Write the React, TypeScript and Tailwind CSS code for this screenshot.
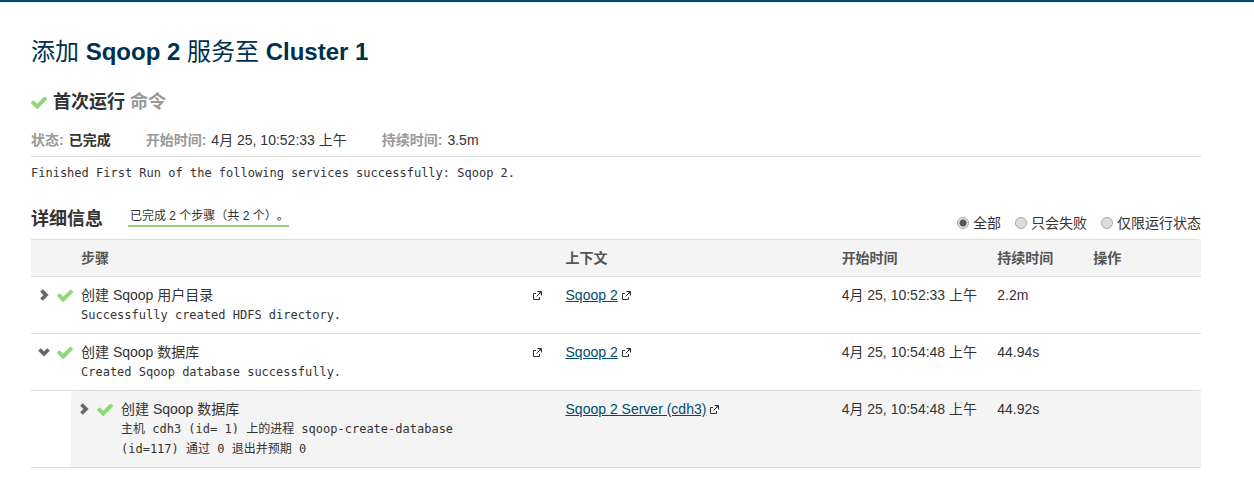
import { useState } from "react";

const META = [
  { label: "状态:", value: "已完成", strong: true },
  { label: "开始时间:", value: "4月 25, 10:52:33 上午" },
  { label: "持续时间:", value: "3.5m" },
];

const FILTERS = ["全部", "只会失败", "仅限运行状态"];

interface Step {
  name: string;
  message: string;
  context: string;
  start: string;
  duration: string;
  open?: boolean;
  nested?: boolean;
}

const STEPS: Step[] = [
  {
    name: "创建 Sqoop 用户目录",
    message: "Successfully created HDFS directory.",
    context: "Sqoop 2",
    start: "4月 25, 10:52:33 上午",
    duration: "2.2m",
  },
  {
    name: "创建 Sqoop 数据库",
    message: "Created Sqoop database successfully.",
    context: "Sqoop 2",
    start: "4月 25, 10:54:48 上午",
    duration: "44.94s",
    open: true,
  },
  {
    name: "创建 Sqoop 数据库",
    message: "主机 cdh3 (id= 1) 上的进程 sqoop-create-database\n(id=117) 通过 0 退出并预期 0",
    context: "Sqoop 2 Server (cdh3)",
    start: "4月 25, 10:54:48 上午",
    duration: "44.92s",
    nested: true,
  },
];

const MONO = "font-['DejaVu_Sans_Mono','Noto_Sans_CJK_SC',monospace] text-xs leading-5";

function CheckIcon() {
  return (
    <svg className="h-[13px] w-4 shrink-0 fill-[#8ed87a]" viewBox="121 270 1550 1252" preserveAspectRatio="none" aria-hidden="true">
      <path d="M1671 566q0 40-28 68l-724 724-136 136q-28 28-68 28t-68-28l-136-136-362-362q-28-28-28-68t28-68l136-136q28-28 68-28t68 28l294 295 656-657q28-28 68-28t68 28l136 136q28 28 28 68z" />
    </svg>
  );
}

function Chevron({ open }: { open?: boolean }) {
  return (
    <svg className={open ? "size-3 shrink-0 rotate-90" : "size-3 shrink-0"} viewBox="0 0 12 12" aria-hidden="true">
      <path
        d="M2.5 2.8 4.8.5 10.3 6l-5.500 5.500-2.300-2.300L5.700 6z"
        fill="#666"
        stroke="#666"
        strokeWidth=".6"
        strokeLinejoin="round"
      />
    </svg>
  );
}

function ExternalIcon() {
  return (
    <svg className="size-[9px]" viewBox="0 0 9 9" fill="none" stroke="#333" aria-hidden="true">
      <path d="M3 2.5H.5v6h6V6M4.5 .5h4v4M8 1 3.5 5.5" />
      <path d="M6 1h2v2z" fill="#333" stroke="none" />
    </svg>
  );
}

function StepRow({ step }: { step: Step }) {
  const cell = `border-b border-[#ddd] p-2 align-top ${step.nested ? "bg-[#f4f4f4]" : ""}`;

  return (
    <tr>
      {step.nested && <td className="border-b border-[#ddd]" />}
      <td colSpan={step.nested ? 1 : 2} className={`${cell} ${step.nested ? "rounded-tl" : ""}`}>
        <div className="flex items-start gap-2 pr-2">
          <button type="button" aria-label={step.name} aria-expanded={!!step.open} className="flex h-5 w-[10px] items-center justify-center">
            <Chevron open={step.open} />
          </button>
          <span className="flex h-5 items-center">
            <CheckIcon />
          </span>
          <div className="flex-1">
            <p>{step.name}</p>
            <p className={`${MONO} whitespace-pre-line`}>{step.message}</p>
          </div>
          {!step.nested && (
            <a href="#step" aria-label={step.name} className="flex h-5 items-center">
              <ExternalIcon />
            </a>
          )}
        </div>
      </td>
      <td className={cell}>
        <div className="flex items-center gap-1">
          <a href="#context" className="text-[#004c70] underline">
            {step.context}
          </a>
          <ExternalIcon />
        </div>
      </td>
      <td className={cell}>{step.start}</td>
      <td className={cell}>{step.duration}</td>
      <td className={`${cell} ${step.nested ? "rounded-tr" : ""}`} />
    </tr>
  );
}

export default function App() {
  const [filter, setFilter] = useState(FILTERS[0]);
  const th = "border-y border-[#ddd] bg-[#f4f4f4] p-2 text-left font-bold text-[#555]";

  return (
    <div className="border-t-2 border-[#004c70] bg-white font-['Liberation_Sans','Noto_Sans_CJK_SC',sans-serif] text-sm leading-5 text-[#333]">
      <main className="pr-[53px] pl-[31px]">
        <h1 className="pt-[30px] text-2xl leading-10 font-bold text-[#00304d]">
          <span className="font-normal">添加</span> Sqoop 2 <span className="font-normal">服务至</span> Cluster 1
        </h1>

        <h2 className="mt-5 flex items-center gap-[6px] text-lg leading-5 font-bold">
          <CheckIcon />
          <span>
            首次运行 <span className="text-[#999]">命令</span>
          </span>
        </h2>

        <dl className="mt-[18px] flex gap-[35px] border-b border-[#ddd] pb-[6px]">
          {META.map((item) => (
            <div key={item.label} className="flex gap-[5px]">
              <dt className="font-bold text-[#999]">{item.label}</dt>
              <dd className={item.strong ? "font-bold" : ""}>{item.value}</dd>
            </div>
          ))}
        </dl>

        <p className={`${MONO} mt-[6px]`}>
          Finished First Run of the following services successfully: Sqoop 2.
        </p>

        <section>
          <div className="mt-6 flex items-start pb-[6px]">
            <h3 className="mt-[2px] text-lg leading-5 font-bold">详细信息</h3>
            <p className="ml-[25px] border-b-2 border-[#8ed87a] pl-[2px] text-xs leading-[18px] [text-spacing-trim:space-all]">
              已完成 2 个步骤（共 2 个）。
            </p>
            <div role="radiogroup" aria-label="详细信息" className="mt-[6px] ml-auto flex gap-[14px]">
              {FILTERS.map((name) => (
                <label key={name} className="flex items-center gap-1">
                  <input
                    type="radio"
                    name="filter"
                    checked={filter === name}
                    onChange={() => setFilter(name)}
                    className="size-3 appearance-none rounded-full border border-[#aaa] bg-[#ddd] checked:bg-[radial-gradient(circle,#555_3px,#e4e4e4_4px)]"
                  />
                  {name}
                </label>
              ))}
            </div>
          </div>

          <table className="w-full table-fixed border-separate border-spacing-0">
            <colgroup>
              <col className="w-10" />
              <col />
              <col className="w-[23.6%]" />
              <col className="w-[13.3%]" />
              <col className="w-[8.2%]" />
              <col className="w-[9.9%]" />
            </colgroup>
            <thead>
              <tr>
                <th colSpan={2} className={`${th} pl-[50px]`}>步骤</th>
                <th className={th}>上下文</th>
                <th className={th}>开始时间</th>
                <th className={th}>持续时间</th>
                <th className={`${th} rounded-tr`}>操作</th>
              </tr>
            </thead>
            <tbody>
              {STEPS.map((step) => (
                <StepRow key={step.duration} step={step} />
              ))}
            </tbody>
          </table>
        </section>
      </main>
    </div>
  );
}
